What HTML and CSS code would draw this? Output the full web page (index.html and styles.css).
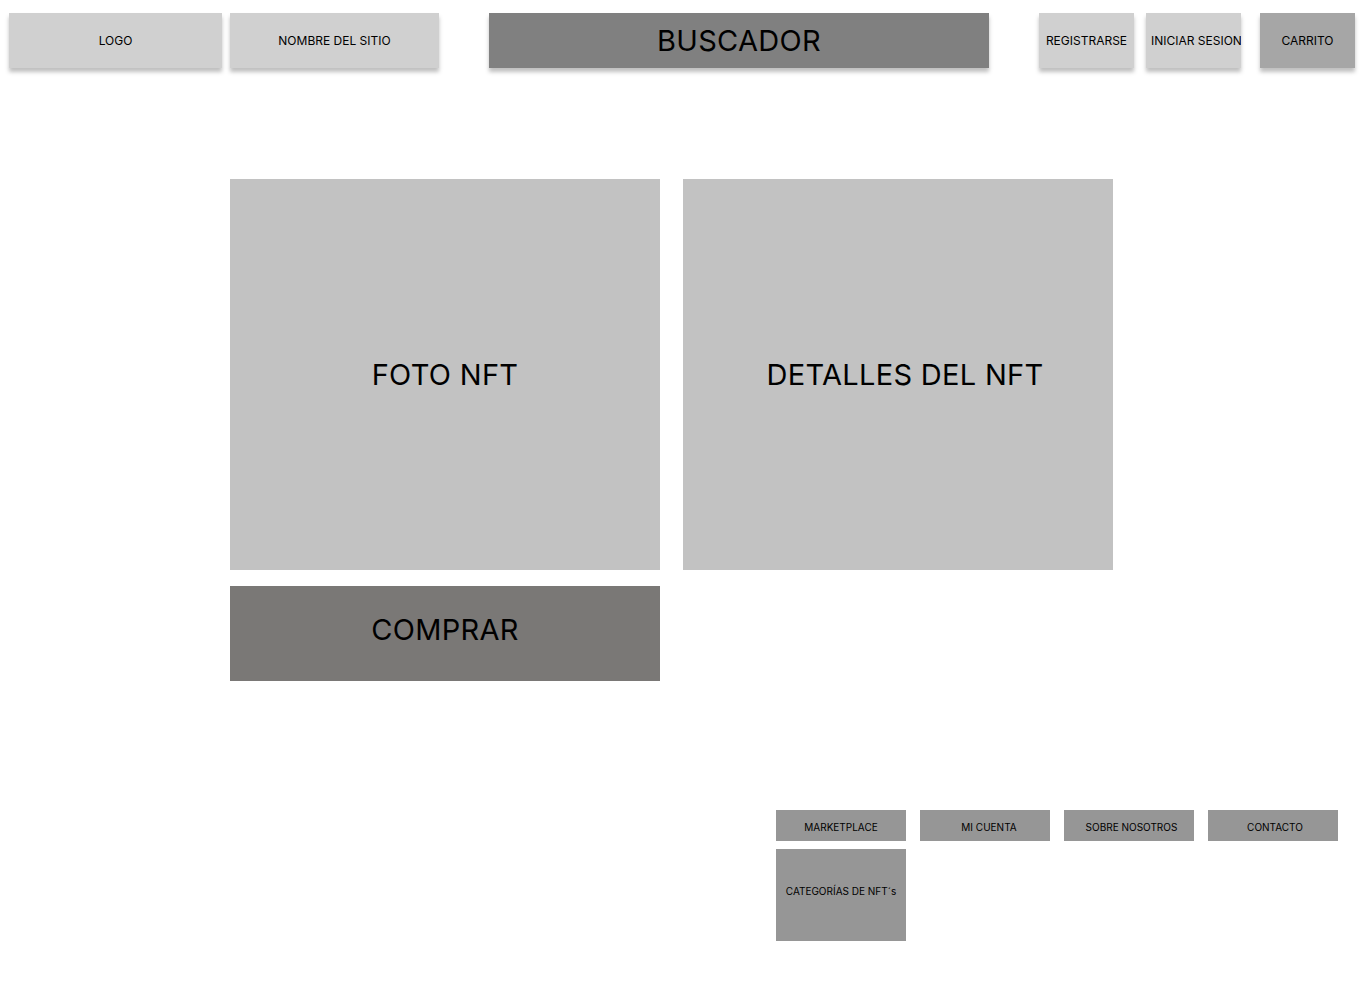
FILE: index.html
```html
<!DOCTYPE html>
<html lang="es">
<head>
    <meta charset="UTF-8">
    <meta name="viewport" content="width=device-width, initial-scale=1.0">
    <title>NFT</title>
    <link rel="stylesheet" href="styles.css">
</head>
<body>
    <header class="top_bar">
        <div class="box shadow logo">LOGO</div>
        <div class="box shadow site_name">NOMBRE DEL SITIO</div>
        <div class="box shadow search">BUSCADOR</div>
        <div class="box shadow register">REGISTRARSE</div>
        <div class="box shadow login">INICIAR SESION</div>
        <div class="box shadow cart">CARRITO</div>
    </header>

    <main class="nft_wrap">
        <div class="box nft_photo">FOTO NFT</div>
        <div class="box nft_details">DETALLES DEL NFT</div>
        <div class="box buy">COMPRAR</div>
    </main>

    <footer class="footer_nav">
        <div class="box link">MARKETPLACE</div>
        <div class="box link account">MI CUENTA</div>
        <div class="box link about">SOBRE NOSOTROS</div>
        <div class="box link contact">CONTACTO</div>
        <div class="box link categories">CATEGORÍAS DE NFT´s</div>
    </footer>
</body>
</html>
```

FILE: styles.css
```css
body{
    margin:0;
    font-family: Inter, "Noto Sans", sans-serif;
    color:#000;
    background:#fff;
}

.box{
    display:flex;
    align-items:center;
    justify-content:center;
    text-align:center;
    white-space:nowrap;
}

.shadow{
    box-shadow: 0 4px 4px rgba(0,0,0,0.25);
}

/* cabecera */
.top_bar{
    display:flex;
    padding:13px 0 0 9px;
    height:55px;
}

.top_bar .box{
    height:55px;
    font-size:12px;
    background:#d0d0d0;
}

.logo{ width:213px; }
.site_name{ width:209px; margin-left:8px; }

.top_bar .search{
    width:500px;
    margin-left:50px;
    background:#808080;
    font-size:29px;
    letter-spacing:0.3px;
}

.register{ width:95px; margin-left:50px; }

.top_bar .login{
    width:95px;
    margin-left:12px;
    justify-content:flex-start;
    padding-left:5px;
    box-sizing:border-box;
    overflow:hidden;
}

.top_bar .cart{
    width:95px;
    margin-left:19px;
    background:#a6a6a6;
}

/* contenido */
.nft_wrap{
    display:grid;
    grid-template-columns:430px 430px;
    grid-template-rows:391px 95px;
    column-gap:23px;
    row-gap:16px;
    margin:111px 0 0 230px;
}

.nft_photo, .nft_details{
    background:#c2c2c2;
    font-size:29px;
    letter-spacing:0.3px;
}

.nft_details{
    padding-left:14px;
}

.buy{
    background:#7a7876;
    font-size:29px;
    letter-spacing:0.3px;
    padding-bottom:8px;
}

/* pie */
.footer_nav{
    display:grid;
    grid-template-columns:repeat(4, 130px);
    grid-template-rows:31px 92px;
    column-gap:14px;
    row-gap:8px;
    margin:129px 0 0 776px;
}

.link{
    background:#969696;
    font-size:10px;
    padding-top:3px;
}

.account{ padding-left:8px; }
.about{ padding-left:5px; }
.contact{ padding-left:4px; }

.categories{
    padding-top:0;
    padding-bottom:8px;
}
```
